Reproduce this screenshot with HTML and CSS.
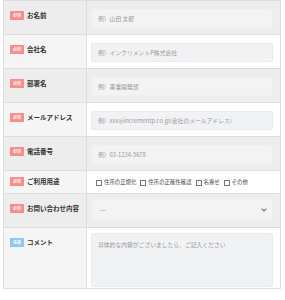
FILE: index.html
```html
<!DOCTYPE html>
<html lang="ja">
<head>
    <meta charset="UTF-8">
    <meta name="viewport" content="width=device-width, initial-scale=1.0">
    <title>お問い合わせ</title>
    <link rel="stylesheet" href="styles.css">
</head>
<body>

<form class="contact">
    <table class="form-table">
        <tr class="row-dark">
            <th><span class="badge">必須</span>お名前</th>
            <td><input type="text" placeholder="例）山田 太郎"></td>
        </tr>
        <tr>
            <th><span class="badge">必須</span>会社名</th>
            <td><input type="text" placeholder="例）インクリメントP株式会社"></td>
        </tr>
        <tr class="row-dark">
            <th><span class="badge">必須</span>部署名</th>
            <td><input type="text" placeholder="例）事業開発部"></td>
        </tr>
        <tr>
            <th><span class="badge">必須</span>メールアドレス</th>
            <td><input type="text" placeholder="例）xxx@incrementp.co.jp(会社のメールアドレス)"></td>
        </tr>
        <tr class="row-dark">
            <th><span class="badge">必須</span>電話番号</th>
            <td><input type="text" placeholder="例）03-1234-5678"></td>
        </tr>
        <tr class="row-check">
            <th><span class="badge">必須</span>ご利用用途</th>
            <td>
                <div class="checks">
                    <label><span class="box"></span>住所の正規化</label>
                    <label><span class="box"></span>住所の正確性確認</label>
                    <label><span class="box"></span>名寄せ</label>
                    <label><span class="box"></span>その他</label>
                </div>
            </td>
        </tr>
        <tr class="row-dark">
            <th><span class="badge">必須</span>お問い合わせ内容</th>
            <td>
                <div class="select">
                    <span>---</span>
                    <svg width="6" height="4" viewBox="0 0 6 4"><path d="M0.6 0.6 L3 3 L5.4 0.6" fill="none" stroke="#777" stroke-width="1.1"/></svg>
                </div>
            </td>
        </tr>
        <tr>
            <th><span class="badge optional">任意</span>コメント</th>
            <td><textarea placeholder="具体的な内容がございましたら、ご記入ください"></textarea></td>
        </tr>
    </table>
</form>

</body>
</html>
```

FILE: styles.css
```css
body {
    margin: 0;
    padding: 0;
    background-color: #fff;
    font-family: 'Noto Sans CJK JP', 'Noto Sans', sans-serif;
    color: #333;
}
.contact {
    padding: 0 4px 5px 3px;
}
.form-table {
    width: 100%;
    border-collapse: collapse;
    border: 1px solid #dedede;
}
.form-table th,
.form-table td {
    border-top: 1px solid #dedede;
    vertical-align: top;
    padding: 0;
}
.form-table th {
    width: 83px;
    box-sizing: border-box;
    background-color: #f5f5f5;
    border-right: 1px solid #dedede;
    text-align: left;
    font-size: 6.5px;
    font-weight: bold;
    line-height: 9px;
    padding: 10px 4px 0 6px;
    white-space: nowrap;
}
.form-table td {
    background-color: #fff;
    height: 34px;
    box-sizing: border-box;
    padding: 8px 7px 0 4px;
}
.form-table tr.row-dark th,
.form-table tr.row-dark td {
    background-color: #ededed;
}
.badge {
    display: inline-block;
    vertical-align: top;
    width: 14px;
    height: 9px;
    margin-right: 3px;
    background-color: #ff8c8c;
    color: #fff;
    font-size: 4px;
    line-height: 9px;
    text-align: center;
    font-weight: bold;
}
.badge.optional {
    background-color: #8fc7f7;
}
input,
textarea,
.select {
    display: block;
    width: 100%;
    box-sizing: border-box;
    border: 1px solid #e8e9ec;
    border-radius: 2px;
    background-color: #f1f2f4;
    font-family: inherit;
    font-size: 5.8px;
    color: #333;
    outline: none;
}
input {
    height: 19px;
    padding: 0 6px;
}
.row-dark input,
.row-dark .select {
    background-color: #f3f3f3;
    border-color: #f0f0f0;
}
input::placeholder,
textarea::placeholder {
    color: #999;
}
textarea {
    height: 54px;
    padding: 6px 6px;
    resize: none;
}
.form-table tr:last-child td {
    height: 61px;
    padding-top: 5px;
}
.row-check td {
    height: 23px;
    padding: 8px 0 0 9px;
}
.row-check th {
    padding-top: 6px;
}
.checks {
    display: flex;
    gap: 4px;
    font-size: 5.4px;
    line-height: 7px;
    color: #444;
}
.checks label {
    display: flex;
    align-items: center;
    gap: 2px;
    white-space: nowrap;
}
.box {
    width: 4px;
    height: 4px;
    border: 1px solid #777;
    background-color: #fff;
}
.select {
    height: 21px;
    margin-top: -3px;
    padding: 0 5px 0 8px;
    display: flex;
    align-items: center;
    justify-content: space-between;
    color: #777;
}
```
